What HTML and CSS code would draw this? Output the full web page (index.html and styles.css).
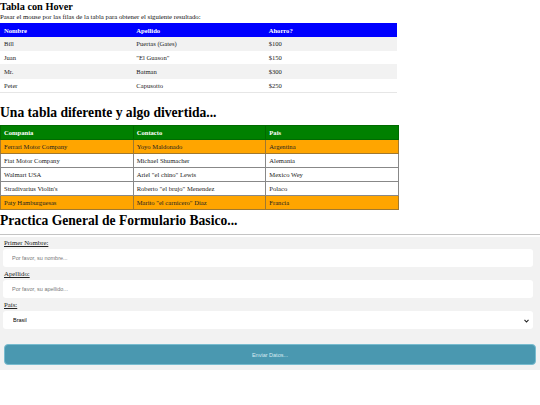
FILE: index.html
```html
<!DOCTYPE html>
<html>
<head>
<meta charset="utf-8">
<link rel="stylesheet" href="styles.css">
</head>
<body>
<h3 class="t1">Tabla con Hover</h3>
<p class="intro">Pasar el mouse por las filas de la tabla para obtener el siguiente resultado:</p>
<table class="hover">
<tr><th>Nombre</th><th>Apellido</th><th>Ahorro?</th></tr>
<tr><td>Bill</td><td>Puertas (Gates)</td><td>$100</td></tr>
<tr><td>Juan</td><td>"El Guason"</td><td>$150</td></tr>
<tr><td>Mr.</td><td>Batman</td><td>$300</td></tr>
<tr><td>Peter</td><td>Capusotto</td><td>$250</td></tr>
</table>
<h2 class="t2">Una tabla diferente y algo divertida...</h2>
<table class="fun">
<tr><th>Compania</th><th>Contacto</th><th>Pais</th></tr>
<tr class="hl"><td>Ferrari Motor Company</td><td>Yoyo Maldonado</td><td>Argentina</td></tr>
<tr><td>Fiat Motor Company</td><td>Michael Shumacher</td><td>Alemania</td></tr>
<tr><td>Walmart USA</td><td>Ariel "el chino" Lewis</td><td>Mexico Wey</td></tr>
<tr><td>Stradivarius Violin's</td><td>Roberto "el brujo" Menendez</td><td>Polaco</td></tr>
<tr class="hl"><td>Paty Hamburguesas</td><td>Marito "el carnicero" Diaz</td><td>Francia</td></tr>
</table>
<h2 class="t3">Practica General de Formulario Basico...</h2>
<hr class="sep">
<form class="form">
<label class="lbl" for="n">Primer Nombre:</label>
<input class="field" id="n" type="text" placeholder="Por favor, su nombre...">
<label class="lbl" for="a">Apellido:</label>
<input class="field" id="a" type="text" placeholder="Por favor, su apellido...">
<label class="lbl" for="p">País:</label>
<div class="selwrap">
<select class="field sel" id="p"><option>Brasil</option></select>
<svg class="arrow" width="5" height="4" viewBox="0 0 5 4"><path d="M0.5 0.8 L2.5 3 L4.5 0.8" fill="none" stroke="#222" stroke-width="1.1"/></svg>
</div>
<button class="btn" type="button">Enviar Datos...</button>
</form>
</body>
</html>
```
FILE: styles.css
```css
html, body { margin: 0; padding: 0; background: #fff; }
body { font-family: "Liberation Serif", "Times New Roman", serif; color: #000; }
.t1 { font-size: 10.3px; font-weight: bold; margin: 0; padding-top: 1px; line-height: 11px; }
.intro { font-size: 6.8px; margin: 1px 0 2px 0; line-height: 8px; color: #111; }
table { border-collapse: collapse; font-size: 6.6px; table-layout: fixed; }
.hover { width: 397px; }
.hover th { background: #0000ff; color: #fff; text-align: left; height: 14px; padding: 0 4px; font-weight: bold; }
.hover td { height: 13px; padding: 0 4px; border-bottom: 1px solid #f2f2f2; color: #222; }
.hover tr:nth-child(even) td { background: #f2f2f2; }
.hover tr:last-child td { border-bottom: 1px solid #e6e6e6; }
.t2 { font-size: 13.6px; font-weight: bold; margin: 11px 0 0 0; line-height: 18px; }
.fun { width: 399px; margin-top: 3px; }
.fun th, .fun td { border: 1px solid #888; height: 13px; padding: 0 3px; text-align: left; color: #222; }
.fun th { background: #008000; color: #fff; font-weight: bold; border-color: #006a00; }
.fun tr.hl td { background: #ffa500; border-color: #a07830; }
.t3 { font-size: 13.6px; font-weight: bold; margin: 2px 0 0 0; line-height: 18px; }
.sep { border: 0; border-top: 1px solid #c4c4c4; margin: 4px 0 2px 0; height: 0; }
.form { background: #f2f2f2; padding: 2px 3px 5px 3px; display: flex; flex-direction: column; }
.lbl { font-family: "Liberation Serif", "Times New Roman", serif; font-size: 6.8px; text-decoration: underline; color: #222; margin-left: 1px; line-height: 8px; }
.field { box-sizing: border-box; height: 18px; border: 0; border-radius: 3px; background: #fff; margin: 2px 4px 3px 0; padding: 0 9px; font-family: "Liberation Sans", Arial, sans-serif; font-size: 5.5px; color: #000; outline: none; }
.field::placeholder { color: #777; }
.selwrap { position: relative; display: flex; flex-direction: column; margin-bottom: 12px; }
.sel { appearance: none; -webkit-appearance: none; width: auto; padding: 0 10px; }
.arrow { position: absolute; right: 8px; top: 10px; }
.btn { height: 21px; border: 1px solid #79bccf; border-radius: 4px; background: #4a98b0; color: #d6ebf2; font-family: "Liberation Sans", Arial, sans-serif; font-size: 5.5px; margin: 0 1px 0 1px; padding: 0; }
```
